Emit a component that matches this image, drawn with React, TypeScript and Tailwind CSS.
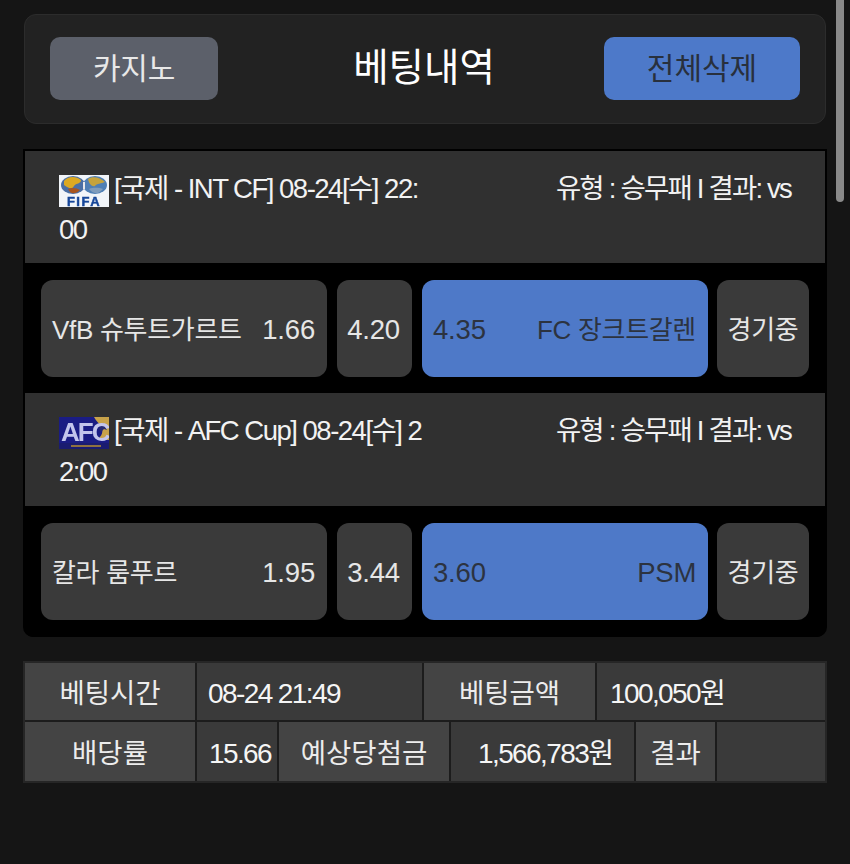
const font = { fontFamily: '"Liberation Sans", "Noto Sans CJK KR", sans-serif' };

function FifaLogo() {
  return (
    <svg width="50" height="32" viewBox="0 0 50 32" className="mt-[4px] inline-block shrink-0 blur-[0.3px]">
      <rect width="50" height="32" fill="#f2f5f9" />
      <ellipse cx="14" cy="10" rx="12" ry="9" fill="#4a6fa5" />
      <ellipse cx="36" cy="10" rx="12" ry="9" fill="#4f7fb5" />
      <path d="M5 6 C9 1 17 1 22 5 C22 9 17 8 15 11 C13 15 9 13 5 10 Z" fill="#dca922" />
      <path d="M9 14 C13 12 18 13 21 15 C16 20 11 19 9 14 Z" fill="#a8551e" />
      <path d="M29 4 C33 1 41 2 46 7 C42 9 38 8 36 11 C33 12 30 9 29 4 Z" fill="#c6a33c" />
      <path d="M30 14 C35 12 41 13 44 14 C39 20 34 19 30 14 Z" fill="#7f9cbc" />
      <path d="M24 7 L26 7 L26 14 L24 14 Z" fill="#e8e8ea" />
      <text x="25" y="30.5" textAnchor="middle" fontFamily="Liberation Sans" fontWeight="700" fontSize="13" fill="#17479a" letterSpacing="1.5" stroke="#17479a" strokeWidth="0.5">FIFA</text>
    </svg>
  );
}

function AfcLogo() {
  return (
    <svg width="50" height="32" viewBox="0 0 50 32" className="mt-[4px] inline-block shrink-0 blur-[0.4px]">
      <rect width="50" height="32" fill="#1a1c84" />
      <path d="M35 0 H50 V23 H38 C43 19 45 14 42 9 C40 6 37 4 35 0 Z" fill="#c7a24a" />
      <path d="M40 12 L44 6 L48 13 L45 12 L42 15 Z" fill="#262a72" />
      <text x="2" y="24" fontFamily="Liberation Sans" fontWeight="700" fontSize="26" fill="#c3c5ec" letterSpacing="-2">AFC</text>
      <rect x="0" y="26" width="50" height="6" fill="#1a1c70" />
      <rect x="12" y="28" width="30" height="2" fill="#8e7140" />
    </svg>
  );
}

function MatchHeader({ logo, lines, h }: { logo: React.ReactNode; lines: [string, string]; h: string }) {
  return (
    <div className={`${h} flex justify-between bg-[#303030] pl-[34px] pr-[34px] pt-[17px] text-[27.5px] leading-[41px] text-[#f2f2f2]`}>
      <div className="w-[370px] tracking-[-1.5px]">
        <div className="flex items-center gap-[5px] whitespace-nowrap">
          {logo}
          <span>{lines[0]}</span>
        </div>
        <div className="whitespace-nowrap">{lines[1]}</div>
      </div>
      <div className="whitespace-nowrap tracking-[-1.8px]">유형 : 승무패 I 결과: vs</div>
    </div>
  );
}

function OddsRow({ pb, home, homeOdd, draw, awayOdd, away, awayClass }: { pb: string; home: string; homeOdd: string; draw: string; awayOdd: string; away: string; awayClass?: string }) {
  const cell = "flex h-[97px] items-center rounded-[12px] pt-[3px] text-[26px] tracking-[-0.3px]";
  const odd = "text-[27.5px] tracking-[-0.2px]";
  return (
    <div className={`${pb} flex bg-black px-[16px] pt-[17px]`}>
      <div className={`${cell} w-[286px] justify-between bg-[#3a3a3a] pl-[11px] pr-[12px] text-[#e6e6e6]`}>
        <span className="whitespace-nowrap">{home}</span>
        <span className={odd}>{homeOdd}</span>
      </div>
      <div className={`${cell} ml-[10px] w-[75px] justify-center bg-[#3a3a3a] pr-[2px] text-[#e6e6e6]`}>
        <span className={odd}>{draw}</span>
      </div>
      <div className={`${cell} ml-[10px] w-[286px] justify-between bg-[#4e79c8] pl-[11px] pr-[12px] text-[#2c3340]`}>
        <span className={odd}>{awayOdd}</span>
        <span className={`whitespace-nowrap ${awayClass ?? ""}`}>{away}</span>
      </div>
      <div className={`${cell} ml-[9px] w-[92px] justify-center bg-[#3a3a3a] text-[26.5px] text-[#e6e6e6]`}>경기중</div>
    </div>
  );
}

function Label({ w, children }: { w: string; children?: React.ReactNode }) {
  return <div className={`${w} flex h-full items-center justify-center bg-[#444444] pt-[5px] text-[27.5px] text-[#ececec]`}>{children}</div>;
}

function Value({ w, pad, children }: { w: string; pad?: string; children?: React.ReactNode }) {
  return (
    <div className={`${w} ${pad ?? "pl-[11px]"} flex h-full items-center bg-[#3a3a3a] pt-[5px] text-[28px] tracking-[-1.6px] text-[#f5f5f5]`}>
      {children}
    </div>
  );
}

export default function App() {
  return (
    <div className="relative h-[864px] w-[850px] overflow-hidden bg-[#151515] pl-[23px] pt-[14px]" style={font}>
      <div className="ml-px flex h-[110px] w-[802px] items-center justify-between rounded-[12px] border border-[#2c2c2c] bg-[#222222] px-[25px] pb-[2px]">
        <button className="flex h-[63px] w-[168px] items-center justify-center rounded-[10px] bg-[#5c606a] text-[30px] tracking-[-0.3px] text-[#e8e8e8]">카지노</button>
        <h1 className="ml-[26px] text-[38.5px] font-normal text-white">베팅내역</h1>
        <button className="flex h-[63px] w-[196px] items-center justify-center rounded-[10px] bg-[#4d79c9] text-[30px] text-[#28303d]">전체삭제</button>
      </div>

      <div className="mt-[25px] w-[804px] overflow-hidden rounded-b-[10px] border-x-2 border-t-2 border-black bg-black">
        <MatchHeader h="h-[112px]" logo={<FifaLogo />} lines={["[국제 - INT CF] 08-24[수] 22:", "00"]} />
        <OddsRow pb="pb-[16px]" home="VfB 슈투트가르트" homeOdd="1.66" draw="4.20" awayOdd="4.35" away="FC 장크트갈렌" />
        <MatchHeader h="h-[113px]" logo={<AfcLogo />} lines={["[국제 - AFC Cup] 08-24[수] 2", "2:00"]} />
        <OddsRow pb="pb-[17px]" home="칼라 룸푸르" homeOdd="1.95" draw="3.44" awayOdd="3.60" away="PSM" awayClass="text-[27.5px]" />
      </div>

      <div className="mt-[24px] flex h-[122px] w-[804px] flex-col gap-[2px] border-2 border-[#262626] bg-[#1c1c1c]">
        <div className="flex h-[57px] gap-[2px]">
          <Label w="w-[170px]">베팅시간</Label>
          <Value w="w-[225px]">08-24 21:49</Value>
          <Label w="w-[171px]">베팅금액</Label>
          <Value w="w-[228px]" pad="pl-[13px]">100,050원</Value>
        </div>
        <div className="flex h-[59px] gap-[2px]">
          <Label w="w-[170px]">배당률</Label>
          <Value w="w-[80px]" pad="pl-[12px]">15.66</Value>
          <Label w="w-[170px]">예상당첨금</Label>
          <Value w="w-[183px]" pad="pl-[27px]">1,566,783원</Value>
          <Label w="w-[79px]">결과</Label>
          <Value w="w-[108px]" />
        </div>
      </div>

      <div className="absolute left-[836px] top-[-10px] h-[212px] w-[8px] rounded-full bg-[#8a8a8a]" />
    </div>
  );
}
